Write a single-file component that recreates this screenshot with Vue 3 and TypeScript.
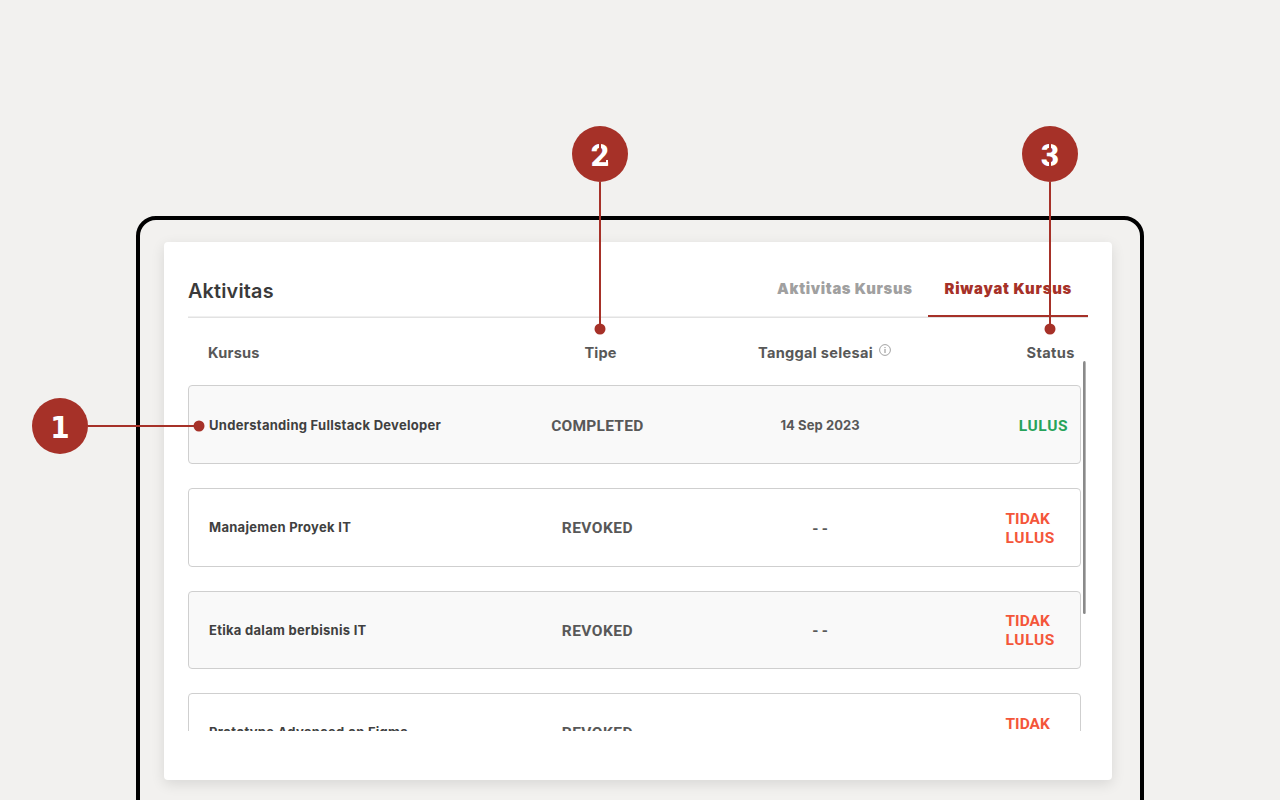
<script setup lang="ts">
interface Course {
  name: string
  type: string
  date: string
  passed: boolean
}

const courses: Course[] = [
  { name: 'Understanding Fullstack Developer', type: 'COMPLETED', date: '14 Sep 2023', passed: true },
  { name: 'Manajemen Proyek IT', type: 'REVOKED', date: '- -', passed: false },
  { name: 'Etika dalam berbisnis IT', type: 'REVOKED', date: '- -', passed: false },
  { name: 'Prototype Advanced on Figma', type: 'REVOKED', date: '', passed: false },
]
</script>

<template>
  <main class="stage">
    <section class="frame">
      <article class="card">
        <header class="head">
          <h1 class="title">Aktivitas</h1>
          <nav class="tabs">
            <a class="tab">Aktivitas Kursus</a>
            <a class="tab active">Riwayat Kursus</a>
          </nav>
        </header>
        <div class="columns">
          <span class="label kursus">Kursus</span>
          <span class="label mid">Tipe</span>
          <span class="label mid tanggal">
            <span>Tanggal selesai</span>
            <svg class="info" width="12" height="12" viewBox="0 0 12 12">
              <circle cx="6" cy="6" r="5.4" fill="none" stroke="#a3a3a3" stroke-width="1" />
              <path d="M6 5v4" stroke="#8c8c8c" stroke-width="1" />
              <path d="M6 3v1.1" stroke="#8c8c8c" stroke-width="1" />
            </svg>
          </span>
          <span class="label status-label">Status</span>
        </div>
        <div class="list">
          <div v-for="(c, i) in courses" :key="c.name" class="row" :class="{ shaded: i % 2 === 0 }">
            <span class="name">{{ c.name }}</span>
            <span class="type" :class="{ done: c.passed }">{{ c.type }}</span>
            <span class="date" :class="{ none: !c.passed }">{{ c.date }}</span>
            <span v-if="c.passed" class="status pass">LULUS</span>
            <span v-else class="status fail"><span class="tidak">TIDAK</span><span>LULUS</span></span>
          </div>
        </div>
        <i class="scrollbar"></i>
      </article>
    </section>

    <div class="callout one">
      <span class="badge slab">1</span><i class="line"></i><i class="dot"></i>
    </div>
    <div class="callout two">
      <span class="badge cut-top serif">2</span><i class="line"></i><i class="dot"></i>
    </div>
    <div class="callout three">
      <span class="badge cut-top cut-bottom">3</span><i class="line"></i><i class="dot"></i>
    </div>
  </main>
</template>

<style>
body { margin: 0; background: #f2f1ef; overflow: hidden; }
</style>

<style scoped>
.stage {
  position: relative;
  box-sizing: border-box;
  width: 1280px;
  height: 800px;
  padding: 216px 136px 0;
  overflow: hidden;
  background: #f2f1ef;
  font-family: Inter, Roboto, "Liberation Sans", sans-serif;
  color: #585858;
}
.frame {
  box-sizing: border-box;
  width: 1008px;
  height: 640px;
  border: 4px solid #000;
  border-radius: 20px;
  padding: 22.4px 24px;
}
.card {
  position: relative;
  box-sizing: border-box;
  width: 948px;
  height: 537.4px;
  padding: 24px 24px 0;
  border-radius: 4px;
  background: #fff;
  box-shadow: 0 4px 14px rgba(0, 0, 0, 0.11);
}
.head {
  box-sizing: border-box;
  display: flex;
  justify-content: space-between;
  width: 900px;
  height: 51.5px;
  box-shadow: inset 0 -1.5px 0 #e2e2e2;
}
.title {
  margin: 12px 0 0;
  font-size: 19.8px;
  line-height: 26px;
  font-weight: 600;
  letter-spacing: 0.2px;
  color: #3a3a3a;
}
.tabs { display: flex; height: 51px; }
.tab {
  box-sizing: border-box;
  height: 50.5px;
  padding: 12px 15.5px 0 16px;
  font-size: 14.8px;
  line-height: 22px;
  font-weight: 900;
  letter-spacing: 0.65px;
  color: #a0a0a0;
  white-space: nowrap;
}
.tab.active {
  width: 160px;
  padding-left: 16.5px;
  color: #a63128;
  border-bottom: 2px solid #a63128;
  letter-spacing: 0.8px;
}
.columns {
  display: grid;
  grid-template-columns: 4fr 3fr 3fr 2fr;
  width: 900px;
  height: 67.5px;
}
.label {
  padding-top: 25px;
  font-size: 14.6px;
  line-height: 20px;
  font-weight: 700;
  letter-spacing: 0.2px;
}
.kursus { padding-left: 20px; }
.mid { display: flex; justify-content: center; letter-spacing: 0.1px; }
.tanggal { gap: 6px; padding-right: 2px; letter-spacing: 0.3px; }
.info { margin-top: 1px; }
.status-label { text-align: right; padding-right: 13.3px; letter-spacing: 0.35px; }
.list {
  display: flex;
  flex-direction: column;
  gap: 24px;
  width: 893px;
  height: 345.5px;
  overflow: hidden;
}
.row {
  box-sizing: border-box;
  flex: none;
  display: grid;
  grid-template-columns: 4fr 3fr 3fr 2fr;
  align-items: center;
  height: 78.6px;
  border: 1px solid #cfcfcf;
  border-radius: 4px;
  background: #fff;
}
.row.shaded { background: #f9f9f9; }
.name {
  padding: 0 0 0 20px;
  font-size: 13px;
  line-height: 20px;
  font-weight: 700;
  letter-spacing: 0.28px;
  color: #404040;
  white-space: nowrap;
}
.type {
  padding-top: 2px;
  text-align: center;
  font-family: Roboto, sans-serif;
  font-size: 15.5px;
  line-height: 20px;
  font-weight: 700;
  letter-spacing: 0.45px;
}
.type.done { letter-spacing: 0.25px; }
.date {
  text-align: center;
  font-size: 13px;
  line-height: 20px;
  font-weight: 700;
  letter-spacing: 0.08px;
}
.date.none { padding-top: 1px; font-weight: 800; letter-spacing: 0.3px; }
.status {
  font-family: Roboto, sans-serif;
  font-size: 15.5px;
  line-height: 19px;
  font-weight: 700;
  letter-spacing: 0.65px;
}
.pass { padding: 3px 11.8px 0 0; text-align: right; color: #27a35a; }
.fail { display: flex; flex-direction: column; padding: 3px 0 0 74px; color: #f4563a; }
.tidak { letter-spacing: 0; }
.scrollbar {
  position: absolute;
  left: 919px;
  top: 119px;
  width: 3px;
  height: 253px;
  border-radius: 2px;
  background: linear-gradient(90deg, #8a8a8a 2px, #b4b4b4 2px);
}
.callout { position: absolute; display: flex; align-items: center; }
.one { left: 32px; top: 398px; }
.two { left: 572px; top: 126px; flex-direction: column; }
.three { left: 1022px; top: 126px; flex-direction: column; }
.badge {
  position: relative;
  width: 56px;
  height: 56px;
  border-radius: 50%;
  background: #a63128;
  color: #fff;
  font-family: Roboto, sans-serif;
  font-size: 32px;
  line-height: 58px;
  font-weight: 800;
  text-align: center;
}
.slab {
  font-family: "DejaVu Sans Condensed", "DejaVu Sans", sans-serif;
  font-size: 31px;
  line-height: 58px;
  font-weight: 700;
}
.cut-top::before,
.cut-bottom::after {
  content: "";
  position: absolute;
  left: 27px;
  width: 2px;
  height: 8px;
  background: #a63128;
}
.cut-top::before { top: 15px; }
.cut-bottom::after { top: 34px; }
.serif::after {
  content: "";
  position: absolute;
  left: 34px;
  top: 34px;
  width: 2px;
  height: 5px;
  background: #fff;
}
.line { background: #a63128; }
.one .line { width: 107px; height: 2px; }
.two .line,
.three .line { width: 2px; height: 143px; }
.dot {
  width: 12px;
  height: 12px;
  background: #a63128;
  clip-path: circle(5.5px);
}
.one .dot { margin-left: -2px; }
.two .dot,
.three .dot { margin-top: -2px; }
</style>
